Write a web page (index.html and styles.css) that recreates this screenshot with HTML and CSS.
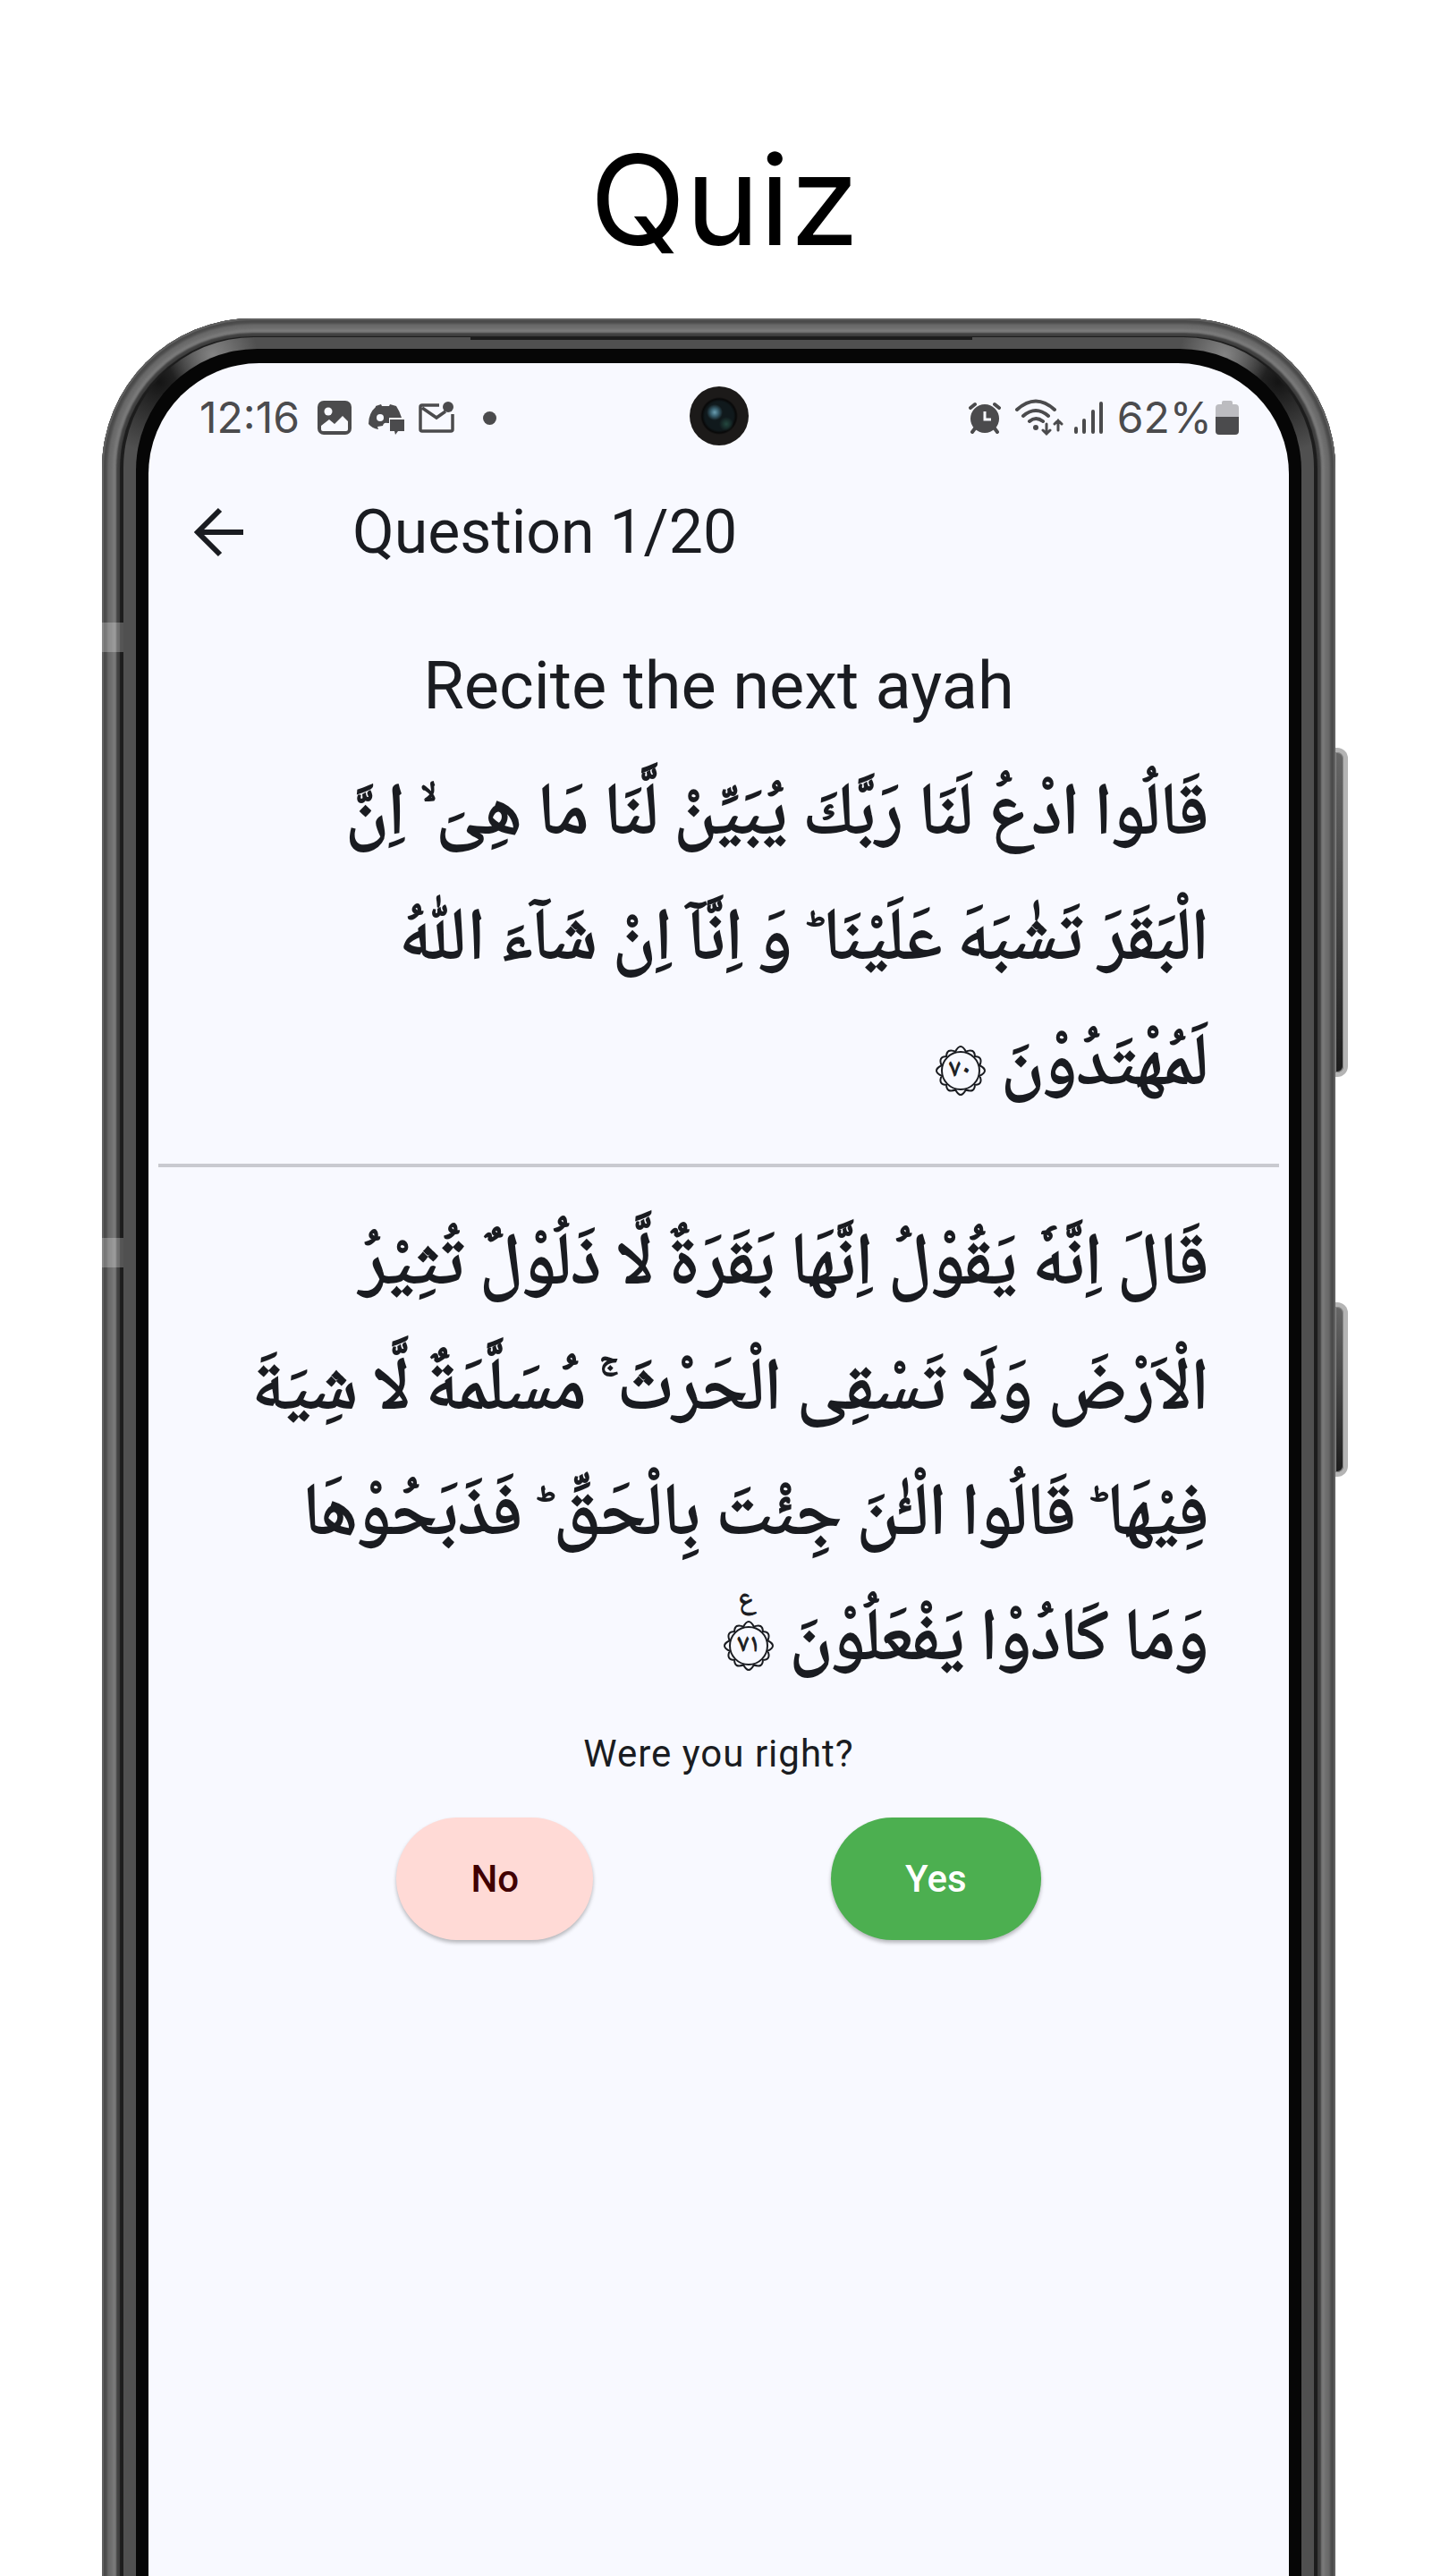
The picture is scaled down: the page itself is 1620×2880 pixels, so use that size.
FILE: index.html
```html
<!DOCTYPE html>
<html lang="en">
<head>
<meta charset="utf-8">
<meta name="viewport" content="width=device-width, initial-scale=1">
<title>Quiz</title>
<link rel="stylesheet" href="styles.css">
</head>
<body>
<svg width="0" height="0" class="defs" aria-hidden="true">
  <symbol id="rosette" viewBox="-28 -28 56 56">
    <g fill="none" stroke="#1a1c21" stroke-width="2">
      <circle r="21"/>
      <path d="M-6-21Q0-33 6-21M5-21Q16-26 16-15M15-16Q26-16 21-5M21-6Q33 0 21 6M21 5Q26 16 15 16M16 15Q16 26 5 21M6 21Q0 33-6 21M-5 21Q-16 26-16 15M-15 16Q-26 16-21 5M-21 6Q-33 0-21-6M-21-5Q-26-16-15-16M-16-15Q-16-26-5-21"/>
    </g>
  </symbol>
</svg>
<h1 class="headline">Quiz</h1>
<div class="stage">
<div class="phone">
  <span class="side-key side-key-volume"></span>
  <span class="side-key side-key-power"></span>
  <span class="antenna antenna-upper"></span>
  <span class="antenna antenna-lower"></span>
  <div class="rim">
    <span class="speaker"></span>
    <div class="bezel">
      <div class="screen">
        <span class="camera"></span>
        <div class="status">
          <div class="status-group">
            <span class="status-text clock">12:16</span>
            <svg class="icon-image" width="38" height="38" viewBox="0 0 38 38"><rect width="38" height="38" rx="7" fill="#4b4b4d"/><circle cx="12" cy="12" r="4.500" fill="#f8f9ff"/><path d="M4 28v4q0 2 2 2h26q2 0 2-2v-9l-6-6-9 9-6-5z" fill="#f8f9ff"/></svg>
            <svg class="icon-chat" width="42" height="38" viewBox="0 0 42 38"><path d="M9 6l6-2 1 2h8l1-2 7 2q4 6 6 13H24v6h-2q-4-1-5 3l-6 1 1 3q-7-1-11-6 0-12 8-19z" fill="#4b4b4d"/><circle cx="14" cy="19" r="4" fill="#f8f9ff"/><path d="M25 21h16v13h-7l-3 4-1-4h-5z" fill="#4b4b4d"/></svg>
            <svg class="icon-mail" width="40" height="38" viewBox="0 0 40 38" fill="none" stroke="#4b4b4d" stroke-width="3.500"><path d="M23 5H4Q2 5 2 7v25q0 2 2 2h32q2 0 2-2V15M4 8l16 11 10-7"/><circle cx="33" cy="7" r="6" fill="#4b4b4d" stroke="none"/></svg>
            <span class="more-dot"></span>
          </div>
          <div class="status-group">
            <svg class="icon-alarm" width="36" height="36" viewBox="0 0 36 36" fill="none" stroke="#4b4b4d" stroke-width="4" stroke-linecap="round"><circle cx="18" cy="19" r="16" fill="#4b4b4d" stroke="none"/><path d="M2 7l5-4M34 7l-5-4M7 30l-3 4M29 30l3 4"/><path d="M18 11v9h7" stroke="#f8f9ff" stroke-width="3" stroke-linecap="butt"/></svg>
            <svg class="icon-wifi" width="54" height="42" viewBox="0 0 54 42" fill="none" stroke="#4b4b4d" stroke-width="4" stroke-linecap="round"><path d="M2 12q21-19 42 0M9 19q14-12 28 0M16 25q7-6 15 0"/><circle cx="23" cy="32" r="3" fill="#4b4b4d" stroke="none"/><path d="M35 28v11M31 35l4 4 4-4M48 35V24M44 28l4-4 4 4" stroke-width="3"/></svg>
            <svg class="icon-signal" width="34" height="36" viewBox="0 0 34 36" stroke="#4b4b4d" stroke-width="4" stroke-linecap="round"><path d="M3 30v4M12 21v13M22 11v23M31 2v32"/></svg>
            <span class="status-text">62%</span>
            <svg class="icon-battery" width="26" height="38" viewBox="0 0 26 38"><path d="M0 8q0-4 4-4h3V2q0-2 2-2h8q2 0 2 2v2h3q4 0 4 4v11H0z" fill="#bcbcc0"/><path d="M0 18h26v16q0 4-4 4H4q-4 0-4-4z" fill="#4b4b4d"/></svg>
          </div>
        </div>
        <header class="appbar">
          <button class="back" type="button" aria-label="Back"><svg width="56" height="56" viewBox="0 0 56 56" fill="none" stroke="#1a1c21" stroke-width="6"><path d="M55 28H5M29 3L4 28l25 25"/></svg></button>
          <h2 class="progress">Question 1/20</h2>
        </header>
        <main class="quiz">
          <h3 class="prompt">Recite the next ayah</h3>
          <p class="ayah ayah-question" lang="ar" dir="rtl">
            <span class="line">قَالُوا ادْعُ لَنَا رَبَّكَ يُبَيِّنْ لَّنَا مَا هِىَ&nbsp;ۙ اِنَّ</span>
            <span class="line">الْبَقَرَ تَشٰبَهَ عَلَيْنَا&nbsp;ؕ وَ اِنَّاۤ اِنْ شَآءَ اللّٰهُ</span>
            <span class="line">لَمُهْتَدُوْنَ <span class="mark"><svg class="ring" width="56" height="56"><use href="#rosette"/></svg>٧٠</span></span>
          </p>
          <hr class="divider">
          <p class="ayah ayah-answer" lang="ar" dir="rtl">
            <span class="line">قَالَ اِنَّهٗ يَقُوْلُ اِنَّهَا بَقَرَةٌ لَّا ذَلُوْلٌ تُثِيْرُ</span>
            <span class="line">الْاَرْضَ وَلَا تَسْقِى الْحَرْثَ ۚ مُسَلَّمَةٌ لَّا شِيَةَ</span>
            <span class="line">فِيْهَا ؕ قَالُوا الْـٰٔنَ جِئْتَ بِالْحَقِّ ؕ فَذَبَحُوْهَا</span>
            <span class="line">وَمَا كَادُوْا يَفْعَلُوْنَ <span class="mark"><svg class="ring" width="56" height="56"><use href="#rosette"/></svg>٧١<span class="ruku">ع</span></span></span>
          </p>
          <p class="ask">Were you right?</p>
          <div class="answers">
            <button class="answer answer-no" type="button">No</button>
            <button class="answer answer-yes" type="button">Yes</button>
          </div>
        </main>
      </div>
    </div>
  </div>
</div>
</div>
</body>
</html>
```
FILE: styles.css
```css
* { box-sizing: border-box; }
body {
  margin: 0;
  min-height: 100vh;
  display: flex;
  flex-direction: column;
  background: #fff;
  color: #1a1c21;
  font-family: Roboto, sans-serif;
}
h1, h2, h3, p { margin: 0; font-weight: 400; }
button { border: 0; padding: 0; font: inherit; color: inherit; background: none; }
svg { display: block; flex: none; }
.defs { position: absolute; }
.headline {
  padding-top: 135px;
  height: 356px;
  text-align: center;
  color: #000;
  font: 400 140px/176px Inter, sans-serif;
}
.stage { flex: 1; display: flex; overflow: hidden; }
.phone {
  position: relative;
  flex: 1;
  display: flex;
  margin: 0 127px -40px 114px;
  padding: 21px 24px 0;
  border-radius: 168px 168px 0 0;
  background: #1c1c1c;
  box-shadow: inset 0 0 0 2px #606060, inset 0 0 3px 6px #4a4a4a, inset 0 0 3px 12px #6c6c6c, inset 0 0 2px 16px #7c7c7c, inset 0 0 1px 20px #404040;
}
.rim {
  position: relative;
  flex: 1;
  display: flex;
  padding: 13px 14px 0;
  border-radius: 146px 146px 0 0;
  background:
    radial-gradient(circle at 100px 20px, #848484 0, transparent 50px),
    radial-gradient(circle at calc(100% - 100px) 20px, #848484 0, transparent 50px),
    radial-gradient(circle at 40px 50px, #141414 0, transparent 80px),
    radial-gradient(circle at calc(100% - 40px) 50px, #141414 0, transparent 80px),
    #505050;
}
.speaker {
  position: absolute;
  top: 0;
  left: 388px;
  right: 382px;
  height: 3px;
  background: #1c1c1c;
}
.bezel {
  flex: 1;
  display: flex;
  padding: 16px 14px 0;
  border-radius: 136px 136px 0 0;
  background: #060606;
}
.screen {
  position: relative;
  flex: 1;
  border-radius: 124px 124px 0 0;
  background: #f8f9ff;
}
.side-key {
  position: absolute;
  left: 100%;
  width: 14px;
  border: 5px solid #b4b4b4;
  border-left: 0;
  border-radius: 0 12px 12px 0;
  background: linear-gradient(#666, #4a4a4a 40%, #1c1c1c);
  box-shadow: inset 0 0 0 1px #888;
}
.side-key-volume { top: 480px; height: 368px; }
.side-key-power { top: 1100px; height: 195px; }
.antenna {
  position: absolute;
  left: 0;
  width: 24px;
  height: 33px;
  background: #ffffff40;
}
.antenna-upper { top: 340px; }
.antenna-lower { top: 1028px; }
.camera {
  position: absolute;
  top: 26px;
  left: 50%;
  width: 66px;
  height: 66px;
  margin-left: -33px;
  border-radius: 50%;
  background:
    radial-gradient(circle at 28px 29px, #6b9eb0 0, #3b6474 4px, transparent 9px),
    radial-gradient(circle at 41px 42px, #24483f 0, transparent 8px),
    radial-gradient(circle at center, #10191c 0 16px, #080808 19px, #1c1a19 21px);
}
.status {
  display: flex;
  justify-content: space-between;
  padding: 36px 56px 0 57px;
  color: #4b4b4d;
}
.status-group { display: flex; align-items: center; height: 50px; }
.status-text { font: 400 48px/50px Inter, sans-serif; }
.icon-image { margin-left: 20px; }
.icon-chat { margin-left: 18px; }
.icon-mail { margin-left: 15px; }
.more-dot { width: 15px; height: 15px; margin-left: 32px; border-radius: 50%; background: #4b4b4d; }
.icon-wifi { margin-left: 16px; }
.icon-signal { margin: 0 15px 0 11px; }
.icon-battery { margin-left: 4px; }
.appbar { display: flex; align-items: center; height: 80px; margin-top: 63px; padding-left: 51px; }
.back { width: 56px; height: 56px; }
.progress { margin-left: 121px; font-size: 68px; line-height: 80px; }
.prompt { margin-top: 87px; text-align: center; font-size: 74px; line-height: 90px; }
.ayah { padding-right: 90px; font-family: "Noto Naskh Arabic", "DejaVu Sans", sans-serif; font-size: 80px; -webkit-text-stroke: 2px #1a1c21; }
.line { display: block; height: 140px; line-height: 140px; white-space: nowrap; }
.ayah-question { padding-top: 32px; }
.ayah-answer { padding-top: 42px; }
.mark {
  position: relative;
  display: inline-flex;
  align-items: center;
  justify-content: center;
  width: 56px;
  height: 56px;
  bottom: 8px;
  font-size: 28px;
  line-height: 56px;
  -webkit-text-stroke: 1px #1a1c21;
}
.ring { position: absolute; top: 0; left: 0; }
.ruku { position: absolute; top: -42px; left: 16px; font-size: 32px; line-height: 40px; }
.divider { height: 4px; margin: 37px 11px 0; border: 0; background: #c9cad0; }
.ask { margin-top: 29px; text-align: center; font-size: 42px; line-height: 50px; letter-spacing: 1px; }
.answers { display: flex; justify-content: center; gap: 266px; margin-top: 46px; }
.answer { height: 137px; padding: 0 83px; border-radius: 69px; font-size: 42px; font-weight: 500; box-shadow: 0 3px 4px #0004; }
.answer-no { background: #ffdad6; color: #410002; }
.answer-yes { background: #4caf50; color: #fff; }
```
